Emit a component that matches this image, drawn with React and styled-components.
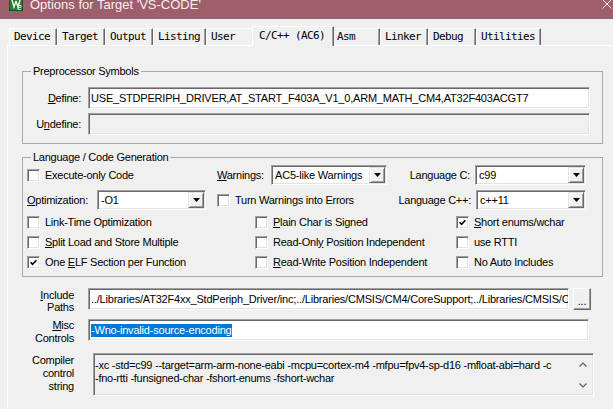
import React from 'react';
import styled, { createGlobalStyle } from 'styled-components';

const GlobalStyle = createGlobalStyle`
  html, body {
    margin:0;
    padding:0;
    background:#f0f0f0;
    overflow:hidden;
  }
  body {
    font-family:"Liberation Sans", Arial, sans-serif;
    font-size:11px;
    letter-spacing:-0.25px;
    color:#000;
  }
`;

const Window = styled.div`
  width:625px;
  height:409px;
  background:#f0f0f0;
  overflow:hidden;
`;

const TitleBar = styled.div`
  height:30px;
  margin-top:-11px;
  background:#9e5e6b;
  display:flex;
  align-items:center;
  padding:0 13px 0 9px;
  box-sizing:border-box;
`;

const Title = styled.span`
  font-size:13px;
  letter-spacing:0;
  color:#f7eef0;
  margin-left:7px;
  white-space:nowrap;
`;

const CloseIcon = styled.svg`
  margin-left:auto;
`;

const Body = styled.div`
  padding:7px 7px 0;
`;

const TabStrip = styled.div`
  display:flex;
  align-items:flex-end;
  height:19px;
  padding-left:2px;
  position:relative;
  z-index:1;
`;

const Tab = styled.div`
  box-sizing:border-box;
  height:${p => (p.$active ? '20px' : '17px')};
  min-width:${p => (p.$active ? '82px' : '48px')};
  margin:${p => (p.$active ? '0 -2px -1px' : '0')};
  padding:${p => (p.$active ? '0 7px 0 6px' : '0 5px 0 4px')};
  line-height:${p => (p.$active ? '18px' : '16px')};
  background:#f0f0f0;
  border-top:1px solid #fff;
  border-left:1px solid #fff;
  border-right:1px solid #696969;
  box-shadow:inset -1px 0 #a0a0a0;
  font-family:"DejaVu Sans Mono", "Liberation Mono", monospace;
  font-size:11px;
  letter-spacing:-0.62px;
  color:#000;
  white-space:pre;
  position:relative;
  z-index:${p => (p.$active ? 2 : 1)};
`;

const Panel = styled.div`
  border-top:1px solid #fff;
  border-left:1px solid #fff;
  border-right:1px solid #696969;
  padding:19px 14px 0;
  height:400px;
`;

const Group = styled.fieldset`
  margin:${p => p.$mt || 0}px 0 0;
  padding:${p => p.$pad};
  border:1px solid #a9a9a9;
  min-width:0;
`;

const Legend = styled.legend`
  margin-left:4px;
  padding:0 2px;
  line-height:13px;
`;

const SymbolGrid = styled.div`
  display:grid;
  grid-template-columns:54px 1fr;
  column-gap:7px;
  row-gap:4px;
  align-items:center;
`;

const RightLabel = styled.label`
  text-align:right;
  white-space:nowrap;
`;

const Sunken = styled.div`
  box-sizing:border-box;
  width:${p => (p.$w ? `${p.$w}px` : 'auto')};
  height:${p => p.$h || 22}px;
  flex-shrink:0;
  background:${p => (p.$disabled ? '#f0f0f0' : '#fff')};
  border:1px solid;
  border-color:#a0a0a0 #fff #fff #a0a0a0;
  box-shadow:inset 1px 1px #696969, inset -1px -1px #e3e3e3;
  display:flex;
  align-items:center;
  padding-left:2px;
  overflow:hidden;
  white-space:nowrap;
  letter-spacing:-0.2px;
`;

const Row = styled.div`
  display:grid;
  grid-template-columns:${p => p.$cols};
  align-items:center;
  height:${p => p.$h}px;
  margin-top:${p => p.$mt || 0}px;
`;

const Cell = styled.div`
  display:flex;
  align-items:center;
  gap:${p => p.$gap || 0}px;
  white-space:nowrap;
`;

const Label = styled.span`
  width:${p => (p.$w ? `${p.$w}px` : 'auto')};
  text-align:${p => p.$align || 'left'};
  flex-shrink:0;
`;

const SelectBox = styled.div`
  box-sizing:border-box;
  width:${p => p.$w}px;
  height:20px;
  background:#fff;
  border:1px solid;
  border-color:#a0a0a0 #fff #fff #a0a0a0;
  box-shadow:inset 1px 1px #696969, inset -1px -1px #e3e3e3;
  display:flex;
  align-items:center;
  flex-shrink:0;
`;

const SelectText = styled.span`
  flex:1;
  padding-left:3px;
  letter-spacing:-0.2px;
`;

const DropButton = styled.span`
  box-sizing:border-box;
  width:16px;
  height:16px;
  margin-right:1px;
  display:flex;
  align-items:center;
  justify-content:center;
  background:#f0f0f0;
  border:1px solid;
  border-color:#e3e3e3 #696969 #696969 #e3e3e3;
  box-shadow:inset 1px 1px #fff, inset -1px -1px #a0a0a0;
`;

const Box = styled.span`
  box-sizing:border-box;
  width:13px;
  height:13px;
  flex-shrink:0;
  background:#fff;
  border:1px solid;
  border-color:#a0a0a0 #fff #fff #a0a0a0;
  box-shadow:inset 1px 1px #696969, inset -1px -1px #e3e3e3;
  display:flex;
  align-items:center;
  justify-content:center;
`;

const Lower = styled.div`
  margin-top:11px;
`;

const FieldRow = styled.div`
  display:grid;
  grid-template-columns:52px auto;
  column-gap:${p => p.$gap}px;
  align-items:start;
  height:${p => p.$h}px;
  margin-top:${p => p.$mt || 0}px;
`;

const FieldLabel = styled.div`
  text-align:right;
  line-height:${p => p.$lh || 13}px;
  padding-top:${p => p.$pt || 0}px;
`;

const Inline = styled.div`
  display:flex;
  gap:4px;
`;

const DotsButton = styled.div`
  box-sizing:border-box;
  width:18px;
  height:22px;
  flex-shrink:0;
  background:#f0f0f0;
  border:1px solid;
  border-color:#fff #696969 #696969 #fff;
  box-shadow:inset -1px -1px #a0a0a0;
  display:flex;
  align-items:flex-end;
  justify-content:center;
  padding-bottom:3px;
  line-height:9px;
`;

const Selected = styled.span`
  background:#0078d7;
  color:#fff;
  line-height:13px;
`;

const TextArea = styled.div`
  box-sizing:border-box;
  width:501px;
  height:43px;
  background:#f0f0f0;
  border:1px solid;
  border-color:#a0a0a0 #fff #fff #a0a0a0;
  box-shadow:inset 1px 1px #696969, inset -1px -1px #e3e3e3;
  display:flex;
  padding:2px 2px 2px 1px;
`;

const AreaText = styled.div`
  flex:1;
  padding-top:3px;
  line-height:12.5px;
  letter-spacing:-0.25px;
`;

const ScrollCol = styled.div`
  width:17px;
  display:flex;
  flex-direction:column;
  justify-content:space-between;
  align-items:center;
  padding:6px 0 5px;
`;

const Triangle = () => (
  <svg width="7" height="4" viewBox="0 0 7 4">
    <polygon points="0,0 7,0 3.5,4" fill="#000" />
  </svg>
);

const Chevron = ({ up }) => (
  <svg width="8" height="5" viewBox="0 0 8 5">
    <path d={up ? 'M0.5 4.5 L4 1 L7.5 4.5' : 'M0.5 0.5 L4 4 L7.5 0.5'} fill="none" stroke="#606060" strokeWidth="1.2" />
  </svg>
);

const Check = ({ checked, children }) => (
  <Cell $gap={5}>
    <Box>
      {checked && (
        <svg width="7" height="7" viewBox="0 0 7 7">
          <path d="M0.6 3.2 L2.6 5.3 L6.4 1.2" fill="none" stroke="#000" strokeWidth="1.6" />
        </svg>
      )}
    </Box>
    <span>{children}</span>
  </Cell>
);

const Select = ({ w, value }) => (
  <SelectBox $w={w}>
    <SelectText>{value}</SelectText>
    <DropButton>
      <Triangle />
    </DropButton>
  </SelectBox>
);

const AppIcon = () => (
  <svg width="14" height="14" viewBox="0 0 14 14">
    <rect x="0.5" y="0.5" width="13" height="13" fill="#2c7a33" stroke="#145a1d" />
    <path d="M3 3 L5 10 L7 4 M7 4 L9 10 L11 3" fill="none" stroke="#fff" strokeWidth="1.3" />
    <path d="M9 8.5 h3 v2 h-3 v2 h3" fill="none" stroke="#e8f5e9" strokeWidth="0.8" />
  </svg>
);

const tabs = ['Device', 'Target', 'Output', 'Listing', 'User', 'C/C++ (AC6)', 'Asm', 'Linker', 'Debug', 'Utilities'];

const App = () => {
  return (
    <Window>
      <GlobalStyle />
      <TitleBar>
        <AppIcon />
        <Title>Options for Target 'VS-CODE'</Title>
        <CloseIcon width="10" height="10" viewBox="0 0 10 10">
          <path d="M0.5 0.5 L9.5 9.5 M9.5 0.5 L0.5 9.5" stroke="#f4e8ea" strokeWidth="1" />
        </CloseIcon>
      </TitleBar>
      <Body>
        <TabStrip>
          {tabs.map(t => (
            <Tab key={t} $active={t === 'C/C++ (AC6)'}>{t}</Tab>
          ))}
        </TabStrip>
        <Panel>
          <Group $pad="9px 12px 8px 4px">
            <Legend>Preprocessor Symbols</Legend>
            <SymbolGrid>
              <RightLabel><u>D</u>efine:</RightLabel>
              <Sunken>USE_STDPERIPH_DRIVER,AT_START_F403A_V1_0,ARM_MATH_CM4,AT32F403ACGT7</Sunken>
              <RightLabel>U<u>n</u>define:</RightLabel>
              <Sunken $disabled />
            </SymbolGrid>
          </Group>

          <Group $mt={7} $pad="1px 4px 4px 4px">
            <Legend>Language / Code Generation</Legend>
            <Row $cols="190px 180px 189px" $h={20}>
              <Check>Execute-only Code</Check>
              <Cell>
                <Label $w={54}><u>W</u>arnings:</Label>
                <Select w={116} value="AC5-like Warnings" />
              </Cell>
              <Cell $gap={5}>
                <Label $w={73} $align="right">Language C:</Label>
                <Select w={111} value="c99" />
              </Cell>
            </Row>
            <Row $cols="190px 180px 189px" $h={22} $mt={4}>
              <Cell>
                <Label $w={70}><u>O</u>ptimization:</Label>
                <Select w={109} value="-O1" />
              </Cell>
              <Check>Turn Warnings into Errors</Check>
              <Cell $gap={5}>
                <Label $w={74} $align="right">Language C++:</Label>
                <Select w={110} value="c++11" />
              </Cell>
            </Row>
            <Row $cols="228px 201px 1fr" $h={20} $mt={1}>
              <Check>Link-Time Optimization</Check>
              <Check><u>P</u>lain Char is Signed</Check>
              <Check checked><u>S</u>hort enums/wchar</Check>
            </Row>
            <Row $cols="228px 201px 1fr" $h={20}>
              <Check><u>S</u>plit Load and Store Multiple</Check>
              <Check>Read-Onl<u>y</u> Position Independent</Check>
              <Check>use RTTI</Check>
            </Row>
            <Row $cols="228px 201px 1fr" $h={20}>
              <Check checked>One <u>E</u>LF Section per Function</Check>
              <Check><u>R</u>ead-Write Position Independent</Check>
              <Check>No Auto Includes</Check>
            </Row>
          </Group>

          <Lower>
            <FieldRow $gap={14} $h={22}>
              <FieldLabel $lh={12} $pt={1}><u>I</u>nclude<br />Paths</FieldLabel>
              <Inline>
                <Sunken $w={481}>../Libraries/AT32F4xx_StdPeriph_Driver/inc;../Libraries/CMSIS/CM4/CoreSupport;../Libraries/CMSIS/CM4/DeviceSupport</Sunken>
                <DotsButton>...</DotsButton>
              </Inline>
            </FieldRow>
            <FieldRow $gap={14} $h={22} $mt={9}>
              <FieldLabel $pt={-1}><u>M</u>isc<br />Controls</FieldLabel>
              <Sunken $w={501}>
                <Selected>-Wno-invalid-source-encoding</Selected>
              </Sunken>
            </FieldRow>
            <FieldRow $gap={19} $h={43} $mt={12}>
              <FieldLabel $pt={1}>Compiler<br />control<br />string</FieldLabel>
              <TextArea>
                <AreaText>
                  -xc -std=c99 --target=arm-arm-none-eabi -mcpu=cortex-m4 -mfpu=fpv4-sp-d16 -mfloat-abi=hard -c<br />
                  -fno-rtti -funsigned-char -fshort-enums -fshort-wchar
                </AreaText>
                <ScrollCol>
                  <Chevron up />
                  <Chevron />
                </ScrollCol>
              </TextArea>
            </FieldRow>
          </Lower>
        </Panel>
      </Body>
    </Window>
  );
};

export default App;
